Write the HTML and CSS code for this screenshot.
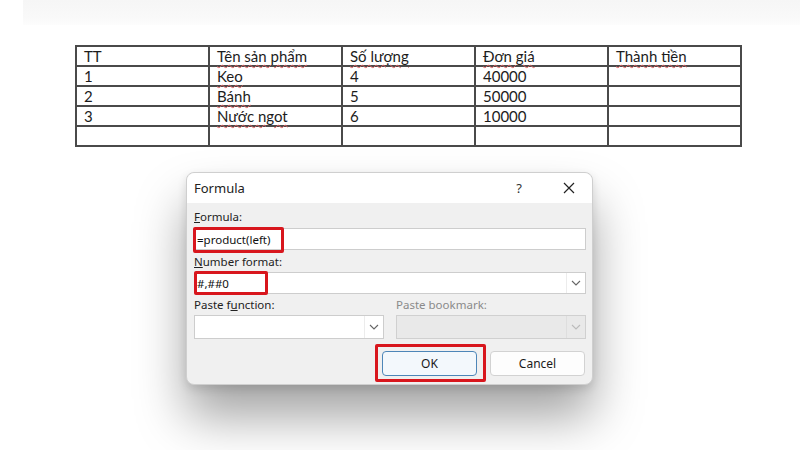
FILE: index.html
```html
<!DOCTYPE html>
<html lang="vi">
<head>
<meta charset="utf-8">
<link rel="stylesheet" href="styles.css">
</head>
<body>
<div class="topband"></div>
<table class="doc-table">
  <tr><td>TT</td><td><span class="sp">Tên sản phẩm</span></td><td><span class="sp">Số lượng</span></td><td><span class="sp">Đơn giá</span></td><td><span class="sp">Thành tiền</span></td></tr>
  <tr><td>1</td><td><span class="sp">Keo</span></td><td>4</td><td>40000</td><td></td></tr>
  <tr><td>2</td><td><span class="sp">Bánh</span></td><td>5</td><td>50000</td><td></td></tr>
  <tr><td>3</td><td><span class="sp">Nước ngot</span></td><td>6</td><td>10000</td><td></td></tr>
  <tr><td></td><td></td><td></td><td></td><td></td></tr>
</table>

<div class="dialog">
  <div class="titlebar">
    <span class="title">Formula</span>
    <span class="help">?</span>
    <span class="close"><svg width="12" height="12" viewBox="0 0 12 12"><path d="M1 1 L11 11 M11 1 L1 11" stroke="#222" stroke-width="1.2" fill="none"/></svg></span>
  </div>
  <div class="body">
    <div class="label"><u>F</u>ormula:</div>
    <div class="field">
      <span class="value">=product(left)</span>
      <span class="mark mark-formula"></span>
    </div>
    <div class="label label2"><u>N</u>umber format:</div>
    <div class="field field2">
      <span class="value">#,##0</span>
      <span class="arrow"><svg width="10" height="6" viewBox="0 0 10 6"><path d="M1 1 L5 5 L9 1" stroke="#666" stroke-width="1.1" fill="none"/></svg></span>
      <span class="mark mark-number"></span>
    </div>
    <div class="row two">
      <div class="col">
        <div class="label">Paste f<u>u</u>nction:</div>
        <div class="field sel">
          <span class="value"></span>
          <span class="arrow"><svg width="10" height="6" viewBox="0 0 10 6"><path d="M1 1 L5 5 L9 1" stroke="#666" stroke-width="1.1" fill="none"/></svg></span>
        </div>
      </div>
      <div class="col">
        <div class="label disabled">Paste bookmark:</div>
        <div class="field sel off">
          <span class="value"></span>
          <span class="arrow"><svg width="10" height="6" viewBox="0 0 10 6"><path d="M1 1 L5 5 L9 1" stroke="#bbb" stroke-width="1.1" fill="none"/></svg></span>
        </div>
      </div>
    </div>
    <div class="buttons">
      <div class="btn ok">OK<span class="mark mark-ok"></span></div>
      <div class="btn cancel">Cancel</div>
    </div>
  </div>
</div>
</body>
</html>
```

FILE: styles.css
```css
* { box-sizing: border-box; }
html, body { margin: 0; padding: 0; background: #fff; }
body { width: 800px; height: 450px; overflow: hidden; position: relative; }

.topband {
  height: 25px;
  margin-left: 23px;
  background: linear-gradient(#f6f6f6, #f9f9f9 70%, #fdfdfd);
}

.doc-table {
  margin: 20px 0 0 75px;
  width: 663px;
  border-collapse: collapse;
  font-family: Lato, "Open Sans", sans-serif;
  font-size: 15px;
  color: #1c1c1c;
  table-layout: fixed;
}
.doc-table td {
  border: 2px solid #4a4a4a;
  height: 20px;
  padding: 0 7px;
  line-height: 17px;
  vertical-align: middle;
  width: 133px;
}
.sp {
  text-decoration: underline wavy #e06060;
  text-decoration-thickness: 1px;
  text-underline-offset: 2px;
}

.dialog {
  margin: 25px 0 0 186px;
  width: 407px;
  height: 213px;
  border: 1px solid #cfcfcf;
  border-radius: 8px;
  background: #f0f0f0;
  box-shadow: 0 32px 50px rgba(0,0,0,0.36), 0 4px 10px rgba(0,0,0,0.12);
  font-family: "Noto Sans", "Open Sans", sans-serif;
  font-size: 11.5px;
  color: #1a1a1a;
  overflow: visible;
}
.titlebar {
  height: 30px;
  background: #fff;
  border-radius: 8px 8px 0 0;
  display: flex;
  align-items: center;
  padding-left: 7px;
}
.title { font-size: 13px; flex: 1; color: #222; }
.help { width: 20px; text-align: center; font-size: 13px; margin-right: 30px; color: #333; }
.close { width: 20px; display: flex; justify-content: center; margin-right: 13px; }

.body { padding: 6px 6px 0 7px; }
.label { height: 16px; line-height: 16px; color: #222; }
.label.disabled { color: #8a8a8a; }
.field {
  position: relative;
  margin-top: 3px;
  height: 22px;
  background: #fff;
  border: 1px solid #cdcdcd;
  display: flex;
  align-items: center;
}
.value { flex: 1; padding-left: 2px; font-size: 11.5px; color: #111; }
.label2 { margin-top: 4px; }
.field2 { margin-top: 2px; }
.arrow {
  width: 19px;
  height: 100%;
  display: flex;
  align-items: center;
  justify-content: center;
  border-left: 1px solid #ececec;
}
.row.two { display: flex; gap: 12px; margin-top: 3px; }
.col { flex: 1; }
.sel { height: 24px; margin-top: 2px; }
.sel.off { background: #e9e9e9; border-color: #d0d0d0; }
.sel.off .arrow { border-left-color: #dedede; }

.buttons {
  display: flex;
  justify-content: flex-end;
  gap: 13px;
  margin-top: 12px;
  padding-right: 1px;
}
.btn {
  position: relative;
  width: 95px;
  height: 25px;
  border-radius: 4px;
  display: flex;
  align-items: center;
  justify-content: center;
  font-size: 12px;
  color: #1a1a1a;
}
.ok { background: #f3f8fc; border: 1.5px solid #4d86b8; }
.cancel { background: #fdfdfd; border: 1px solid #d2d2d2; }

.mark {
  position: absolute;
  border: 3px solid #d8161d;
  border-radius: 2px;
  pointer-events: none;
}
.mark-formula { left: -2px; top: -2px; width: 91px; height: 26px; }
.mark-number { left: -1px; top: -2px; width: 74px; height: 24px; }
.mark-ok { left: -8px; top: -8px; width: 111px; height: 38px; }
```
